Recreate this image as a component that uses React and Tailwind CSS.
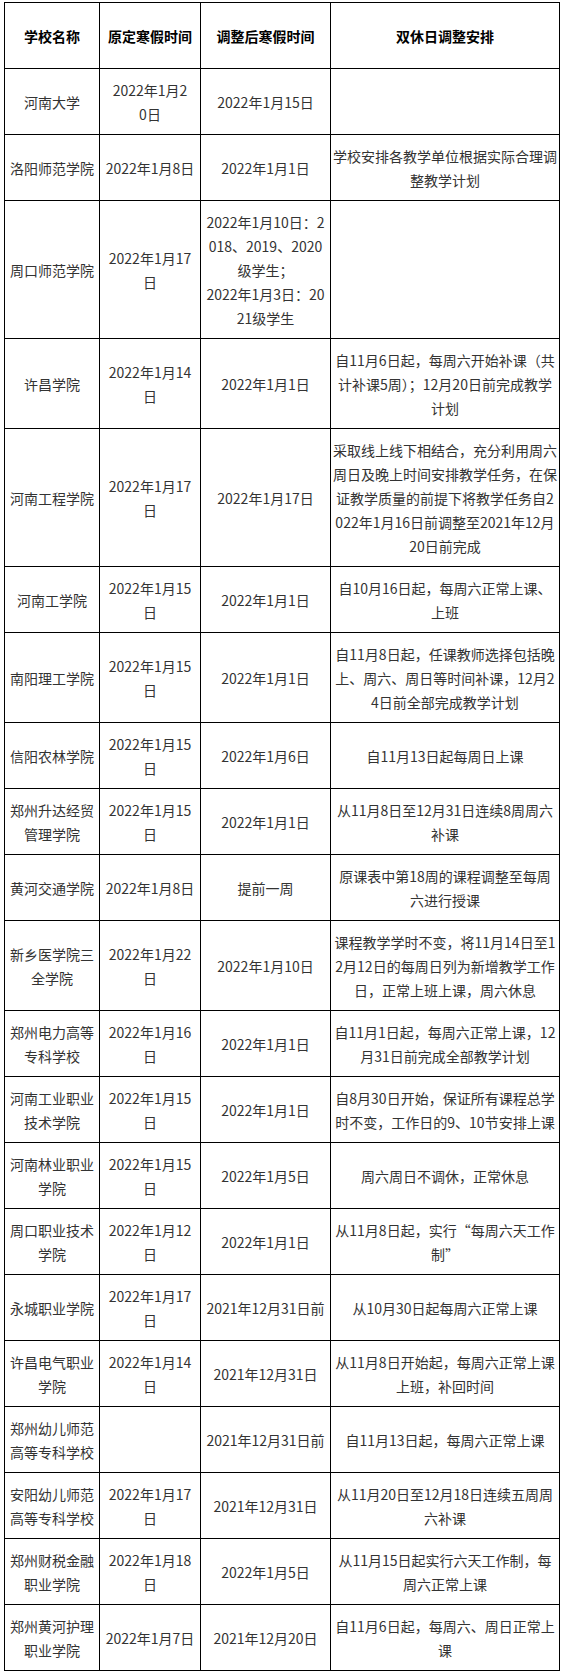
const rows = [
  ["河南大学", ["2022年1月2", "0日"], "2022年1月15日", ""],
  ["洛阳师范学院", "2022年1月8日", "2022年1月1日", "学校安排各教学单位根据实际合理调整教学计划"],
  ["周口师范学院", "2022年1月17日", ["2022年1月10日：2018、2019、2020级学生；", "2022年1月3日：2021级学生"], ""],
  ["许昌学院", "2022年1月14日", "2022年1月1日", "自11月6日起，每周六开始补课（共计补课5周）；12月20日前完成教学计划"],
  ["河南工程学院", "2022年1月17日", "2022年1月17日", "采取线上线下相结合，充分利用周六周日及晚上时间安排教学任务，在保证教学质量的前提下将教学任务自2022年1月16日前调整至2021年12月20日前完成"],
  ["河南工学院", "2022年1月15日", "2022年1月1日", "自10月16日起，每周六正常上课、上班"],
  ["南阳理工学院", "2022年1月15日", "2022年1月1日", "自11月8日起，任课教师选择包括晚上、周六、周日等时间补课，12月24日前全部完成教学计划"],
  ["信阳农林学院", "2022年1月15日", "2022年1月6日", "自11月13日起每周日上课"],
  ["郑州升达经贸管理学院", "2022年1月15日", "2022年1月1日", "从11月8日至12月31日连续8周周六补课"],
  ["黄河交通学院", "2022年1月8日", "提前一周", "原课表中第18周的课程调整至每周六进行授课"],
  ["新乡医学院三全学院", "2022年1月22日", "2022年1月10日", "课程教学学时不变，将11月14日至12月12日的每周日列为新增教学工作日，正常上班上课，周六休息"],
  ["郑州电力高等专科学校", "2022年1月16日", "2022年1月1日", "自11月1日起，每周六正常上课，12月31日前完成全部教学计划"],
  ["河南工业职业技术学院", "2022年1月15日", "2022年1月1日", "自8月30日开始，保证所有课程总学时不变，工作日的9、10节安排上课"],
  ["河南林业职业学院", "2022年1月15日", "2022年1月5日", "周六周日不调休，正常休息"],
  ["周口职业技术学院", "2022年1月12日", "2022年1月1日", "从11月8日起，实行“每周六天工作制”"],
  ["永城职业学院", "2022年1月17日", "2021年12月31日前", "从10月30日起每周六正常上课"],
  ["许昌电气职业学院", "2022年1月14日", "2021年12月31日", "从11月8日开始起，每周六正常上课上班，补回时间"],
  ["郑州幼儿师范高等专科学校", "", "2021年12月31日前", "自11月13日起，每周六正常上课"],
  ["安阳幼儿师范高等专科学校", "2022年1月17日", "2021年12月31日", "从11月20日至12月18日连续五周周六补课"],
  ["郑州财税金融职业学院", "2022年1月18日", "2022年1月5日", "从11月15日起实行六天工作制，每周六正常上课"],
  ["郑州黄河护理职业学院", "2022年1月7日", "2021年12月20日", "自11月6日起，每周六、周日正常上课"],
];

const widths = ["w-[90px]", "w-[92px]", "w-[122px]", "w-[224.8px]"];

function Cell({ children, idx, head }) {
  return (
    <div
      className={
        "flex items-center justify-center border-r border-b border-black " +
        (head ? "py-[20.5px]" : "py-[8.5px]")
      }
    >
      <div
        className={
          widths[idx] +
          " shrink-0 text-center break-all leading-[24px] text-[14px] " +
          (head ? "font-bold text-black" : "text-[#333333]")
        }
      >
        {Array.isArray(children)
          ? children.map((t, i) => <div key={i}>{t}</div>)
          : children}
      </div>
    </div>
  );
}

export default function App() {
  const grid = "grid grid-cols-[95px_101px_130px_229px]";
  return (
    <div
      className="bg-white pt-[2px] pl-[4px] pb-[3px]"
      style={{ fontFamily: '"Noto Sans CJK SC", "Noto Sans", sans-serif' }}
    >
      <div className="w-[556px] border-l border-t border-black" lang="zh-CN">
        <div className={grid}>
          <Cell idx={0} head>学校名称</Cell>
          <Cell idx={1} head>原定寒假时间</Cell>
          <Cell idx={2} head>调整后寒假时间</Cell>
          <Cell idx={3} head>双休日调整安排</Cell>
        </div>
        {rows.map((r, i) => (
          <div key={i} className={grid}>
            {r.map((c, j) => (
              <Cell key={j} idx={j}>
                {c}
              </Cell>
            ))}
          </div>
        ))}
      </div>
    </div>
  );
}
